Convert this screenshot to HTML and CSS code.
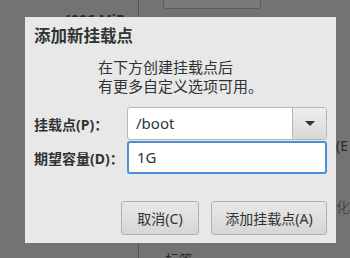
FILE: index.html
```html
<!DOCTYPE html>
<html lang="zh-CN">
<head>
    <meta charset="UTF-8">
    <title>添加新挂载点</title>
    <link rel="stylesheet" href="styles.css">
</head>
<body>
    <div class="backdrop">
        <div class="bg-box"></div>
        <div class="bg-line"></div>
        <div class="bg-size-clip"><span class="bg-size">4096 MiB</span></div>
        <div class="bg-text bg-e">储(E</div>
        <div class="bg-text bg-c">化(</div>
        <div class="bg-text bg-label">标签</div>
    </div>

    <div class="dialog">
        <h1 class="title">添加新挂载点</h1>
        <p class="message">在下方创建挂载点后<br>有更多自定义选项可用。</p>

        <div class="form">
            <label class="label">挂载点(<u>P</u>)：</label>
            <div class="combo">
                <span class="combo-text">/boot</span>
                <span class="combo-button"><span class="arrow"></span></span>
            </div>
            <label class="label">期望容量(<u>D</u>)：</label>
            <div class="entry">1G</div>
        </div>

        <div class="actions">
            <button class="btn btn-cancel">取消(<u>C</u>)</button>
            <button class="btn btn-add">添加挂载点(<u>A</u>)</button>
        </div>
    </div>
</body>
</html>
```

FILE: styles.css
```css
html, body {
    overflow: hidden;
}
body {
    margin: 0;
    width: 350px;
    height: 258px;
    background-color: #737373;
    font-family: "Noto Sans", "Noto Sans CJK SC", sans-serif;
    color: #2e3436;
    position: relative;
}
u {
    text-decoration: none;
}
.backdrop {
    position: absolute;
    inset: 0;
    overflow: hidden;
}
.bg-box {
    position: absolute;
    left: 163px;
    top: -4px;
    width: 96px;
    height: 11px;
    background-color: #7a7a7a;
    border: 1px solid #5c5c5c;
    border-radius: 0 0 3px 3px;
}
.bg-line {
    position: absolute;
    left: 138px;
    top: 0;
    width: 1px;
    height: 258px;
    background-color: #555;
}
.bg-size-clip {
    position: absolute;
    left: 63px;
    top: 0;
    width: 70px;
    height: 17px;
    overflow: hidden;
}
.bg-size {
    display: block;
    margin-top: 10px;
    font-size: 14px;
    line-height: 20px;
    font-weight: bold;
    color: #2a2a2a;
    white-space: nowrap;
}
.bg-text {
    position: absolute;
    font-size: 14px;
    line-height: 20px;
    color: #2a2a2a;
    white-space: nowrap;
}
.bg-e {
    left: 322px;
    top: 136px;
}
.bg-c {
    left: 336px;
    top: 197px;
    color: #4a4a4a;
}
.bg-label {
    left: 165px;
    top: 250px;
}
.dialog {
    position: absolute;
    left: 25px;
    top: 17px;
    width: 293px;
    height: 226px;
    padding: 0 9px;
    background-color: #e8e8e7;
    display: flex;
    flex-direction: column;
}
.title {
    margin: 8px 0 0;
    font-size: 16.5px;
    line-height: 22px;
    font-weight: bold;
    color: #2e3436;
}
.message {
    margin: 11px 0 0 64px;
    font-size: 15px;
    line-height: 19px;
}
.form {
    margin-top: 11px;
    display: grid;
    grid-template-columns: 93px 200px;
    row-gap: 1px;
    align-items: center;
}
.label {
    font-size: 14px;
    font-weight: bold;
    color: #2e3436;
    white-space: nowrap;
}
.combo {
    display: flex;
    height: 31px;
    border: 1px solid #b6b6b3;
    border-radius: 3px;
    background-color: #fff;
    overflow: hidden;
}
.combo-text {
    flex: 1;
    padding-left: 8px;
    font-size: 15px;
    line-height: 31px;
}
.combo-button {
    width: 33px;
    border-left: 1px solid #b6b6b3;
    background: linear-gradient(#eeeeec, #d8d8d6);
    display: flex;
    align-items: center;
    justify-content: center;
}
.arrow {
    width: 0;
    height: 0;
    border-left: 5px solid transparent;
    border-right: 5px solid transparent;
    border-top: 5px solid #2e3436;
}
.entry {
    height: 29px;
    border: 2px solid #4a90d9;
    border-radius: 3px;
    background-color: #fff;
    padding-left: 8px;
    font-size: 15px;
    line-height: 29px;
}
.actions {
    margin-top: 27px;
    display: flex;
    justify-content: flex-end;
    gap: 12px;
}
.btn {
    height: 34px;
    border: 1px solid #b1b1ae;
    border-radius: 3px;
    background: linear-gradient(#e8e8e7, #d6d6d4);
    font-family: "Noto Sans", "Noto Sans CJK SC", sans-serif;
    font-size: 14px;
    color: #2e3436;
    padding: 0;
}
.btn-cancel {
    width: 78px;
}
.btn-add {
    width: 116px;
}
```
